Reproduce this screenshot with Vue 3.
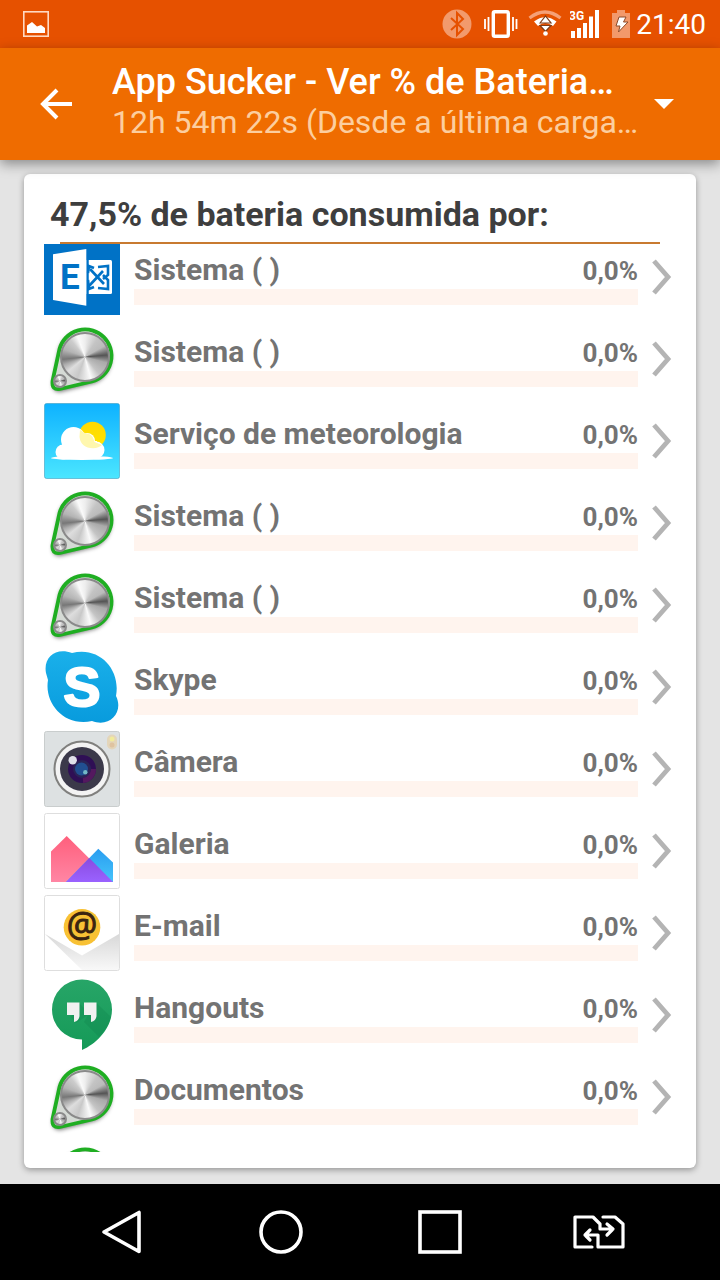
<template>
  <div class="screen">
    <svg class="defs" width="0" height="0" aria-hidden="true">
      <defs>
        <linearGradient id="sky" x1="0" y1="0" x2="0" y2="1">
          <stop offset="0" stop-color="#0eb2ff" />
          <stop offset="1" stop-color="#4be6ff" />
        </linearGradient>
        <linearGradient id="sun" x1="0" y1="0" x2="0" y2="1">
          <stop offset="0" stop-color="#ffd800" />
          <stop offset="1" stop-color="#ffe600" />
        </linearGradient>
        <linearGradient id="skype" x1="0" y1="0" x2="0" y2="1">
          <stop offset="0" stop-color="#1ab0ea" />
          <stop offset="1" stop-color="#089bdd" />
        </linearGradient>
        <linearGradient id="pink" x1="0" y1="0" x2="0" y2="1">
          <stop offset="0" stop-color="#ff5f7c" />
          <stop offset="1" stop-color="#ff86a4" />
        </linearGradient>
        <linearGradient id="blue" x1="0" y1="0" x2="0" y2="1">
          <stop offset="0" stop-color="#2a9df0" />
          <stop offset="1" stop-color="#45c4fb" />
        </linearGradient>
        <linearGradient id="violet" x1="0" y1="0" x2="0" y2="1">
          <stop offset="0" stop-color="#8a4be0" />
          <stop offset="1" stop-color="#9a62ff" />
        </linearGradient>
        <linearGradient id="fold" x1="0" y1="0" x2="0" y2="1">
          <stop offset="0" stop-color="#d8d8d8" />
          <stop offset="1" stop-color="#f8f8f8" />
        </linearGradient>
        <linearGradient id="green" x1="0" y1="0" x2="0" y2="1">
          <stop offset="0" stop-color="#27a567" />
          <stop offset="1" stop-color="#159a58" />
        </linearGradient>
        <filter id="soft" x="-20%" y="-20%" width="140%" height="140%">
          <feGaussianBlur stdDeviation="2" />
        </filter>
      </defs>
    </svg>

    <div class="status">
      <svg class="status-picture" width="26" height="26" viewBox="0 0 26 26">
        <rect x="0.8" y="0.8" width="24.4" height="24.4" fill="none" stroke="#ffd9c2" stroke-width="1.6" />
        <path d="M4 22V14.500L9 11L14 15.500L18 14L22 17V22Z" fill="#fff" />
      </svg>
      <div class="status-icons">
        <svg width="36" height="30" viewBox="0 0 36 30">
          <circle cx="15" cy="15" r="14.5" fill="#f29a6c" />
          <path d="M9 9L21 20L15 26V4L21 10L9 21" fill="none" stroke="#e65100" stroke-width="2" />
        </svg>
        <svg width="42" height="30" viewBox="0 0 42 30">
          <rect x="11.300" y="2.800" width="15" height="24.400" rx="1.500" fill="none" stroke="#fff" stroke-width="3.400" />
          <path d="M3 10V20M6.500 8V22M31 8V22M34.500 10V20" stroke="#fff" stroke-width="1.800" />
        </svg>
        <svg width="38" height="30" viewBox="0 0 38 30">
          <path d="M1.500 9Q17 -3 32.500 9" fill="none" stroke="#f5a077" stroke-width="3.200" />
          <path d="M6 12.500Q17 4 28.500 12.500L25 17Q17 11 10 17Z" fill="#fff" />
          <path d="M12 14L17.500 7L23 14ZM12 16.500H23L17.500 22.500Z" fill="#fff" stroke="#7d3c18" stroke-width="1.200" />
          <circle cx="17.500" cy="24.500" r="2.300" fill="#fff" />
        </svg>
        <svg width="34" height="30" viewBox="0 0 34 30">
          <path d="M3 22V29M9 19V29M15 14V29M21 7.500V29M27 1V29" stroke="#fff" stroke-width="4" />
          <text class="network" x="-1" y="11">3G</text>
        </svg>
        <svg width="24" height="30" viewBox="0 0 24 30">
          <path d="M4 4H9V1H17V4H22V29H4Z" fill="#f2996b" />
          <path d="M11 8H18L15.500 13H20L10.500 23L12 17H8Z" fill="#fff" stroke="#8c4a28" stroke-width="1" />
        </svg>
        <span class="clock">21:40</span>
      </div>
    </div>

    <header class="toolbar">
      <button class="back" type="button" aria-label="Voltar">
        <svg width="34" height="32" viewBox="0 0 34 32">
          <path d="M33 16H4M18 2L4 16L18 30" fill="none" stroke="#fff" stroke-width="4" />
        </svg>
      </button>
      <div class="titles">
        <h1 class="title">App Sucker - Ver % de Bateria…</h1>
        <p class="subtitle">12h 54m 22s (Desde a última carga…</p>
      </div>
      <button class="more" type="button" aria-label="Mais">
        <svg width="20" height="10" viewBox="0 0 20 10"><path d="M0 0H20L10 10Z" fill="#fff" /></svg>
      </button>
    </header>

    <main class="content">
      <section class="card">
        <h2 class="card-title">47,5% de bateria consumida por:</h2>
        <div class="list">
          <ul class="rows">
            <li v-for="(app, index) in apps" :key="index">
              <button class="row" type="button">
                <svg class="app-icon" width="76" height="76" viewBox="0 0 76 76">
                  <g v-if="app.icon === 'exchange'">
                    <rect width="76" height="76" fill="#0072c6" />
                    <rect x="40" y="21" width="28" height="34" rx="1.500" fill="#fff" />
                    <g fill="none" stroke="#0072c6" stroke-width="2.600">
                      <path d="M45 47L59 32M46 30L60 45" />
                      <path d="M54 28L64 27V36L59 40M59 36L64 41V50L54 49M44 34L45 27L50 29M44 41L45 50L50 48" />
                    </g>
                    <path d="M43.500 9V68" stroke="#0072c6" stroke-width="2.500" />
                    <path d="M9 15.300L42.300 10V66.700L9 61Z" fill="#fff" />
                    <text class="letter-e" x="16" y="50">E</text>
                  </g>
                  <g v-else-if="app.icon === 'disc'">
                    <path class="disc-shadow" d="M15 28A27 27 0 1 1 51 62L16 71Q7 71 9 61Z" />
                    <path d="M15.500 28A26.500 26.500 0 1 1 48 60.500L16 68Q7.500 69.500 8.500 60Z" fill="#d5dad5" stroke="#1fae22" stroke-width="3.800" />
                    <foreignObject x="16" y="11" width="50" height="50">
                      <div class="disc"></div>
                    </foreignObject>
                    <foreignObject x="9" y="53" width="14" height="14">
                      <div class="disc"></div>
                    </foreignObject>
                  </g>
                  <g v-else-if="app.icon === 'weather'">
                    <rect x="0.500" y="0.500" width="75" height="75" rx="2" fill="url(#sky)" stroke="#3f9fc0" stroke-opacity="0.600" />
                    <circle cx="48.500" cy="32" r="13.300" fill="url(#sun)" />
                    <g fill="#fff">
                      <circle cx="29.500" cy="36.500" r="12.500" />
                      <circle cx="43" cy="38" r="8" />
                      <circle cx="52" cy="47" r="8.500" />
                      <circle cx="19" cy="49" r="7.500" />
                      <rect x="18" y="38" width="35" height="17" />
                      <ellipse cx="38" cy="55" rx="31" ry="2" />
                    </g>
                    <path d="M36 27Q42 31 43 30.500Q49 31 50.500 39L58 42Q55 45 49 45.300Q37 45 35.500 34Z" fill="#fff7ae" />
                  </g>
                  <g v-else-if="app.icon === 'skype'">
                    <path d="M2 24C-1 8 12 -2 28 4C55 -3 77 20 72 47C80 63 66 79 48 72C20 78 0 54 4 31Z" fill="url(#skype)" />
                    <text class="letter-s" x="38" y="57">S</text>
                  </g>
                  <g v-else-if="app.icon === 'camera'">
                    <rect x="0.500" y="0.500" width="75" height="75" rx="2" fill="#dde1e2" stroke="#c9cdcd" />
                    <circle cx="38" cy="38" r="27.500" fill="#f3f3f3" stroke="#80807e" stroke-width="2" />
                    <circle cx="38" cy="38" r="22" fill="#3b394a" />
                    <circle cx="38" cy="38" r="11.500" fill="#2b2457" stroke="#2f0f55" stroke-width="5" />
                    <path d="M49.500 38A11.500 11.500 0 0 1 39 49.500" fill="none" stroke="#54195f" stroke-width="5" />
                    <circle cx="37.500" cy="38" r="6.500" fill="#214f91" />
                    <circle cx="28.700" cy="29.300" r="4.200" fill="#e0e0ea" />
                    <circle cx="41.300" cy="41.300" r="2.200" fill="#73b9c7" />
                    <rect x="63" y="3.500" width="10" height="15" rx="5" fill="#e3d5ba" />
                    <circle cx="68" cy="8" r="2.500" fill="#f1eb9b" />
                    <circle cx="68" cy="14" r="2.500" fill="#dfc3a0" />
                  </g>
                  <g v-else-if="app.icon === 'gallery'">
                    <rect x="0.500" y="0.500" width="75" height="75" rx="2" fill="#fff" stroke="#dedede" />
                    <path d="M7 38.500L22.700 23L69 69H7Z" fill="url(#pink)" />
                    <path d="M22 69L54.300 35.700L69 49.500V69Z" fill="url(#blue)" />
                    <path d="M22 69L45.300 45L69 69Z" fill="url(#violet)" />
                  </g>
                  <g v-else-if="app.icon === 'mail'">
                    <rect x="0.500" y="0.500" width="75" height="75" rx="2" fill="#fff" />
                    <path d="M1 39L38 60.500L75 39V75H38Z" fill="url(#fold)" />
                    <rect x="0.500" y="0.500" width="75" height="75" rx="2" fill="none" stroke="#dedede" />
                    <circle cx="38" cy="32.300" r="18.300" fill="#f8c134" />
                    <text class="at" x="38" y="42">@</text>
                  </g>
                  <g v-else>
                    <path d="M38 2.500A30 30 0 0 1 68 32.500C68 50 54 66 38 73V62.500A30 30 0 0 1 38 2.500Z" fill="url(#green)" />
                    <path d="M35 26L40 31V26H52.500L67 40Q64 51 55 60L40 45L44 38L32 46L27 40Z" fill="#0b7d46" opacity="0.250" />
                    <path d="M23 25.500H35.500V39Q35 44 30 45V38H23ZM40 25.500H52.500V39Q52 44 47 45V38H40Z" fill="#f1f1f1" />
                  </g>
                </svg>
                <span class="row-body">
                  <span class="row-text">
                    <span class="name">{{ app.name }}</span>
                    <span class="percent">{{ app.percent }}</span>
                  </span>
                  <span class="bar"></span>
                </span>
                <svg class="chevron" width="20" height="36" viewBox="0 0 20 36">
                  <path d="M2 2L16 18L2 34" fill="none" stroke="#b4b4b4" stroke-width="4.800" />
                </svg>
              </button>
            </li>
          </ul>
        </div>
      </section>
    </main>

    <nav class="navbar">
      <button class="nav-button" type="button" aria-label="Voltar">
        <svg width="44" height="44" viewBox="0 0 44 44">
          <path d="M4 22L39 2.500V41.500Z" fill="none" stroke="#fff" stroke-width="3.600" stroke-linejoin="round" />
        </svg>
      </button>
      <button class="nav-button" type="button" aria-label="Início">
        <svg width="44" height="44" viewBox="0 0 44 44">
          <circle cx="22" cy="22" r="20" fill="none" stroke="#fff" stroke-width="3.600" />
        </svg>
      </button>
      <button class="nav-button" type="button" aria-label="Recentes">
        <svg width="44" height="44" viewBox="0 0 44 44">
          <rect x="2" y="2" width="40" height="40" fill="none" stroke="#fff" stroke-width="3.600" />
        </svg>
      </button>
      <button class="nav-button" type="button" aria-label="Trocar SIM">
        <svg width="54" height="36" viewBox="0 0 54 36">
          <g fill="none" stroke="#fff" stroke-width="3.200" stroke-linejoin="round" stroke-linecap="round">
            <path d="M20 33H3V3H21L28 10V15H41M35 10L41 15L35 21" />
            <path d="M31 3H43L51 10V33H26V21H13M18 16L13 21L18 26" />
          </g>
        </svg>
      </button>
    </nav>
  </div>
</template>

<script setup>
import { ref } from 'vue';

const apps = ref([
  { name: 'Sistema ( )', percent: '0,0%', icon: 'exchange' },
  { name: 'Sistema ( )', percent: '0,0%', icon: 'disc' },
  { name: 'Serviço de meteorologia', percent: '0,0%', icon: 'weather' },
  { name: 'Sistema ( )', percent: '0,0%', icon: 'disc' },
  { name: 'Sistema ( )', percent: '0,0%', icon: 'disc' },
  { name: 'Skype', percent: '0,0%', icon: 'skype' },
  { name: 'Câmera', percent: '0,0%', icon: 'camera' },
  { name: 'Galeria', percent: '0,0%', icon: 'gallery' },
  { name: 'E-mail', percent: '0,0%', icon: 'mail' },
  { name: 'Hangouts', percent: '0,0%', icon: 'hangouts' },
  { name: 'Documentos', percent: '0,0%', icon: 'disc' },
  { name: '', percent: '', icon: 'disc' },
]);
</script>

<style scoped>
.screen {
  display: flex;
  flex-direction: column;
  height: 100vh;
  overflow: hidden;
  background: #e4e4e4;
  font-family: Roboto, "Liberation Sans", sans-serif;
}

.defs {
  position: absolute;
}

button {
  border: none;
  padding: 0;
  background: none;
  font: inherit;
  color: inherit;
}

svg {
  display: block;
  flex: none;
}

.status {
  display: flex;
  align-items: center;
  justify-content: space-between;
  flex: none;
  height: 48px;
  padding: 0 14px 0 23px;
  background: #e65100;
}

.status-icons {
  display: flex;
  align-items: center;
  gap: 4px;
}

.network {
  font-size: 12px;
  font-weight: 700;
  fill: #fff;
}

.clock {
  color: #fff;
  font-size: 28px;
  line-height: 32px;
  padding-top: 2px;
}

.toolbar {
  position: relative;
  display: flex;
  align-items: center;
  flex: none;
  height: 112px;
  background: #ef6c00;
  box-shadow: 0 4px 12px rgba(0, 0, 0, 0.4);
}

.back {
  display: flex;
  justify-content: center;
  flex: none;
  width: 112px;
}

.titles {
  flex: 1;
  min-width: 0;
  padding-bottom: 4px;
}

.title,
.subtitle {
  margin: 0;
  overflow: hidden;
  white-space: nowrap;
  text-overflow: ellipsis;
  line-height: 40px;
}

.title {
  color: #fff;
  font-size: 36px;
  font-weight: 500;
}

.subtitle {
  color: #fcce9f;
  font-size: 32px;
}

.more {
  display: flex;
  justify-content: center;
  flex: none;
  width: 36px;
  margin-right: 38px;
}

.content {
  display: flex;
  flex: 1;
  min-height: 0;
  padding: 14px 24px 16px;
}

.card {
  display: flex;
  flex-direction: column;
  flex: 1;
  min-width: 0;
  padding: 0 20px 16px;
  border-radius: 6px;
  background: #fff;
  box-shadow: 0 2px 6px rgba(0, 0, 0, 0.35);
}

.card-title {
  flex: none;
  margin: 0 16px;
  padding: 20px 0 8px;
  border-bottom: 2px solid #c87a30;
  color: #3e3e3e;
  font-size: 34px;
  font-weight: 700;
  line-height: 40px;
  text-indent: -10px;
}

.list {
  flex: 1;
  min-height: 0;
  overflow: hidden;
}

/* the list is scrolled slightly past its first row */
.rows {
  margin: -8px 0 0;
  padding: 0;
  list-style: none;
}

.row {
  display: flex;
  align-items: center;
  width: 100%;
  height: 82px;
  text-align: left;
}

.row-body {
  display: flex;
  flex-direction: column;
  flex: 1;
  height: 82px;
  padding: 16px 14px 0;
  box-sizing: border-box;
}

.row-text {
  display: flex;
  align-items: baseline;
  justify-content: space-between;
  height: 37px;
  color: #737373;
  font-weight: 700;
  line-height: 36px;
}

.name {
  font-size: 30px;
}

.percent {
  font-size: 26px;
}

.bar {
  height: 16px;
  background: #fff4ee;
}

.chevron {
  margin-right: 4px;
}

.letter-e {
  font-size: 35px;
  font-weight: 700;
  fill: #0072c6;
}

.letter-s {
  font-family: "Liberation Sans", sans-serif;
  font-size: 56px;
  font-weight: 700;
  fill: #fff;
  stroke: #fff;
  stroke-width: 2px;
  stroke-linejoin: round;
  text-anchor: middle;
}

.at {
  font-family: "Open Sans", sans-serif;
  font-size: 34px;
  font-weight: 400;
  fill: #3b2410;
  stroke: #3b2410;
  stroke-width: 1px;
  text-anchor: middle;
}

.disc-shadow {
  fill: rgba(0, 0, 0, 0.55);
  filter: url(#soft);
}

.disc {
  width: 100%;
  height: 100%;
  box-sizing: border-box;
  border: 2px solid #8a8a8a;
  border-radius: 50%;
  background: conic-gradient(#eee 0deg, #c4c4c4 35deg, #bbb 60deg, #555 85deg, #aaa 105deg, #c4c4c4 140deg, #fafafa 165deg, #c8c8c8 200deg, #ddd 230deg, #aaa 250deg, #777 264deg, #b4b4b4 290deg, #ccc 320deg, #fafafa 340deg, #eee 360deg);
}

.navbar {
  display: flex;
  align-items: center;
  flex: none;
  height: 96px;
  padding: 0 42px;
  background: #000;
}

.nav-button {
  display: flex;
  align-items: center;
  justify-content: center;
  flex: 1;
}
</style>

<style>
body {
  margin: 0;
}
</style>
